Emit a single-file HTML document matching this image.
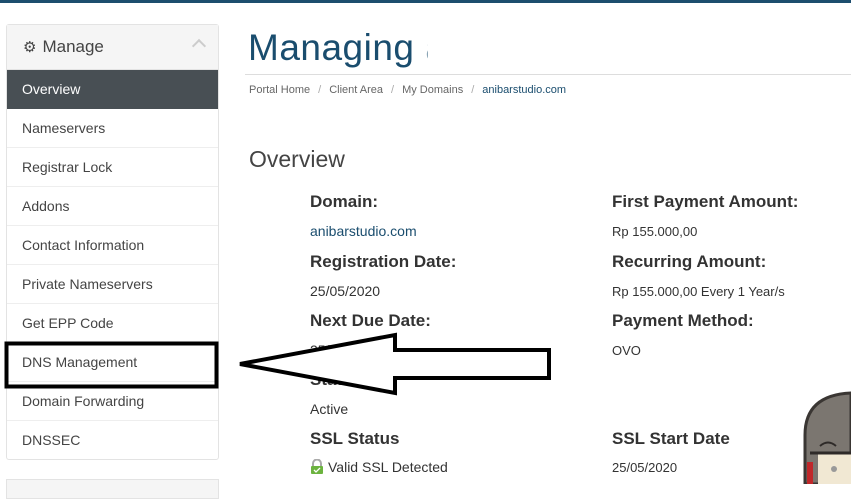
<!DOCTYPE html>
<html><head><meta charset="utf-8"><style>
*{margin:0;padding:0;box-sizing:border-box}
body{width:851px;height:484px;overflow:hidden;background:#fff;font-family:"Liberation Sans",sans-serif;position:relative;color:#333}
.top{position:absolute;left:0;top:0;width:851px;height:3px;background:#1d4e6e}
.panel{position:absolute;left:6px;top:24px;width:213px;height:436px;border:1px solid #e3e3e3;border-radius:3px;background:#fff}
.ph{height:45px;background:#f5f5f5;border-bottom:1px solid #e3e3e3;font-size:17px;color:#444;padding:12px 0 0 16px;position:relative}
.ph .car{position:absolute;right:14px;top:16px;width:10px;height:10px;border-left:2px solid #ccc;border-top:2px solid #ccc;transform:rotate(45deg)}
.it{height:39px;border-bottom:1px solid #eee;font-size:14px;color:#444;padding:11px 0 0 15px}
.it.act{background:#484f54;color:#fff;border-bottom:none}
.panel2{position:absolute;left:6px;top:479px;width:213px;height:20px;border:1px solid #e3e3e3;background:#f5f5f5}
h1{position:absolute;left:248px;top:27px;font-weight:normal;font-size:37px;color:#1a4d6e;letter-spacing:0.5px;width:180px;overflow:hidden;white-space:nowrap}
h1 i{font-style:normal;opacity:.5}
.hr{position:absolute;left:245px;top:74px;width:606px;height:1px;background:#ddd}
.bc{position:absolute;left:249px;top:84px;font-size:11px;color:#666;white-space:nowrap}
.bc span{color:#aaa;margin:0 8px}
.bc a{color:#1a4d6e}
h2{position:absolute;left:249px;top:146px;font-weight:normal;font-size:23px;color:#444}
.l{position:absolute;font-size:17px;font-weight:bold;color:#333;white-space:nowrap}
.v{position:absolute;font-size:14px;color:#333;white-space:nowrap}
</style></head><body>
<div class="top"></div>
<div class="panel">
<div class="ph"><span style="font-size:15px;margin-right:6px">⚙</span>Manage<div class="car"></div></div>
<div class="it act">Overview</div>
<div class="it">Nameservers</div>
<div class="it">Registrar Lock</div>
<div class="it">Addons</div>
<div class="it">Contact Information</div>
<div class="it">Private Nameservers</div>
<div class="it">Get EPP Code</div>
<div class="it">DNS Management</div>
<div class="it">Domain Forwarding</div>
<div class="it" style="border-bottom:none">DNSSEC</div>
</div>
<div class="panel2"></div>
<h1>Managing <i>a</i></h1>
<div class="hr"></div>
<div class="bc">Portal Home<span>/</span>Client Area<span>/</span>My Domains<span>/</span><a>anibarstudio.com</a></div>
<h2>Overview</h2>
<div class="l" style="left:310px;top:192px">Domain:</div>
<div class="v" style="left:310px;top:223px;color:#1a4d6e">anibarstudio.com</div>
<div class="l" style="left:310px;top:252px">Registration Date:</div>
<div class="v" style="left:310px;top:283px">25/05/2020</div>
<div class="l" style="left:310px;top:311px">Next Due Date:</div>
<div class="v" style="left:310px;top:342px">25/05/2021</div>
<div class="l" style="left:310px;top:370px">Status:</div>
<div class="v" style="left:310px;top:401px">Active</div>
<div class="l" style="left:310px;top:429px">SSL Status</div>
<div class="v" style="left:310px;top:459px"><svg width="14" height="15" viewBox="0 0 14 15" style="vertical-align:-2px;margin-right:4px"><path d="M3 7V4.5a4 4 0 0 1 8 0V7" fill="none" stroke="#aaa" stroke-width="2"/><rect x="1" y="7" width="12" height="8" rx="1" fill="#6cb33f"/><path d="M4 11l2 2 4-4" stroke="#fff" fill="none" stroke-width="1.3"/></svg>Valid SSL Detected</div>
<div class="l" style="left:612px;top:192px">First Payment Amount:</div>
<div class="v" style="left:612px;top:224px;font-size:13px">Rp 155.000,00</div>
<div class="l" style="left:612px;top:252px">Recurring Amount:</div>
<div class="v" style="left:612px;top:284px;font-size:13px">Rp 155.000,00 Every 1 Year/s</div>
<div class="l" style="left:612px;top:311px">Payment Method:</div>
<div class="v" style="left:612px;top:343px;font-size:13px">OVO</div>
<div class="l" style="left:612px;top:429px">SSL Start Date</div>
<div class="v" style="left:612px;top:460px;font-size:13px">25/05/2020</div>
<svg style="position:absolute;left:0;top:0" width="851" height="484">
<rect x="6.5" y="343.5" width="210" height="43" fill="none" stroke="#000" stroke-width="4"/>
<polygon points="240,364 395,335 395,350 549,350 549,378 395,378 395,393" fill="#fff" stroke="#000" stroke-width="4" stroke-linejoin="miter"/>
<path d="M805 484 V435 Q805 395 851 393 V484 Z" fill="#7b7670" stroke="#3a3633" stroke-width="3"/>
<path d="M818 452 H851 V484 H818 Z" fill="#f1e8d3"/>
<line x1="810" y1="453" x2="851" y2="453" stroke="#2e2a28" stroke-width="3"/>
<path d="M820 446 q8 -7 16 0" fill="none" stroke="#2e2a28" stroke-width="2"/>
<circle cx="834" cy="469" r="3" fill="#999"/>
<rect x="807" y="462" width="6" height="22" fill="#c0282a"/>
</svg>
</body></html>
